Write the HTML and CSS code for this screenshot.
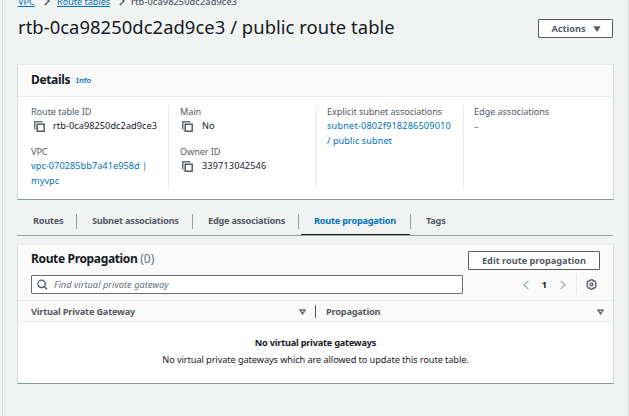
FILE: index.html
```html
<!DOCTYPE html>
<html lang="en">
<head>
<meta charset="utf-8">
<title>Route table details</title>
<link rel="stylesheet" href="styles.css">
</head>
<body>
<svg width="0" height="0" class="defs">
  <symbol id="copy" viewBox="0 0 11 11"><path d="M.8 8.5V.8H8.5" fill="none" stroke="#687078" stroke-width="1.5"/><rect x="3.2" y="3.2" width="7" height="7" fill="#fff" stroke="#545b64" stroke-width="1.5"/></symbol>
  <symbol id="chev" viewBox="0 0 6 10"><path d="M.8 1 5 5 .8 9" fill="none" stroke="currentColor" stroke-width="1.5"/></symbol>
  <symbol id="sort" viewBox="0 0 7 6"><path d="M1 1H6L3.5 5Z" fill="none" stroke="#687078" stroke-width="1.5"/></symbol>
</svg>
<main class="page">
  <nav class="crumbs">
    <a class="c1">VPC</a><svg><use href="#chev"/></svg><a class="c2">Route tables</a><svg><use href="#chev"/></svg><span class="c3">rtb-0ca98250dc2ad9ce3</span>
  </nav>
  <header class="title-row">
    <h1><span>rtb-0ca98250dc2ad9ce3 / public route table</span></h1>
    <button class="btn actions"><span>Actions</span><svg width="8" height="6" viewBox="0 0 8 6"><path d="M.3.3H7.7L4 6Z" fill="#545b64"/></svg></button>
  </header>
  <section class="card details">
    <div class="card-head"><h2>Details</h2><a class="info">Info</a></div>
    <div class="cols">
      <div class="col">
        <div class="field"><div class="label">Route table ID</div><div class="value"><svg class="copy"><use href="#copy"/></svg><span>rtb-0ca98250dc2ad9ce3</span></div></div>
        <div class="field"><div class="label">VPC</div><div class="value link"><span class="vpc">vpc-070285bb7a41e958d |</span></div><div class="value link"><span>myvpc</span></div></div>
      </div>
      <div class="col">
        <div class="field"><div class="label">Main</div><div class="value"><svg class="copy"><use href="#copy"/></svg><span>No</span></div></div>
        <div class="field"><div class="label">Owner ID</div><div class="value"><svg class="copy"><use href="#copy"/></svg><span class="owner">339713042546</span></div></div>
      </div>
      <div class="col">
        <div class="field"><div class="label">Explicit subnet associations</div><div class="value link"><span class="subnet">subnet-0802f918286509010</span></div><div class="value link"><span>/ public subnet</span></div></div>
      </div>
      <div class="col">
        <div class="field"><div class="label">Edge associations</div><div class="value muted">–</div></div>
      </div>
    </div>
  </section>
  <nav class="tabs">
    <a class="t1"><span>Routes</span></a><a class="t2"><span>Subnet associations</span></a><a class="t3"><span>Edge associations</span></a><a class="t4 active"><span>Route propagation</span></a><a class="t5"><span>Tags</span></a>
  </nav>
  <section class="card table-card">
    <div class="table-top">
      <h2>Route Propagation <span class="count">(0)</span></h2>
      <button class="btn edit"><span>Edit route propagation</span></button>
    </div>
    <div class="tools">
      <div class="search"><svg width="11" height="11" viewBox="0 0 11 11"><circle cx="4.6" cy="4.8" r="3.7" fill="none" stroke="#545b64" stroke-width="1.3"/><path d="M7.3 7.5 10 10.2" stroke="#545b64" stroke-width="1.5"/></svg><span>Find virtual private gateway</span></div>
      <div class="pager"><svg class="prev"><use href="#chev"/></svg><b>1</b><svg><use href="#chev"/></svg></div>
      <div class="settings"><svg width="11" height="11" viewBox="0 0 11 11" fill="none" stroke="#545b64" stroke-width="1.3"><path d="M4.3 .8H6.7L7.2 2 8.8 1.9 10.1 4 9.4 5.5 10.1 7 8.8 9.1 7.2 9 6.7 10.2H4.3L3.8 9 2.2 9.1 .9 7 1.6 5.5 .9 4 2.2 1.9 3.8 2Z"/><circle cx="5.5" cy="5.5" r="1.4"/></svg></div>
    </div>
    <div class="thead">
      <div class="th th1"><span>Virtual Private Gateway</span><svg class="sort"><use href="#sort"/></svg></div>
      <div class="th th2"><span>Propagation</span><svg class="sort"><use href="#sort"/></svg></div>
    </div>
    <div class="empty"><b>No virtual private gateways</b><p>No virtual private gateways which are allowed to update this route table.</p></div>
  </section>
</main>
</body>
</html>
```
FILE: styles.css
```css
* { box-sizing: border-box; }
body { margin: 0; height: 416px; overflow: hidden; background: #f1f3f3; font-family: "Noto Sans", sans-serif; font-size: 9.2px; color: #16191f; white-space: nowrap; }
h1, h2, p { margin: 0; }
svg { display: block; flex: none; }
.defs { position: absolute; }
.page { height: 416px; margin-left: 2px; padding: 0 14px; border-left: 1px solid #d5dbdb; border-right: 1px solid #d5dbdb; overflow: hidden; }
.crumbs { display: flex; height: 7px; align-items: flex-end; padding-left: 1px; line-height: 8px; color: #545b64; }
.crumbs svg { width: 6px; height: 10px; margin: 0 7px 1px 9px; }
.crumbs a { color: #0073bb; border-bottom: 1px solid #0073bb; }
.crumbs .c1 { width: 17px; }
.crumbs .c2 { width: 53px; letter-spacing: -.06px; }
.crumbs .c3 { margin-left: -1px; padding-bottom: 1px; font-weight: 500; letter-spacing: .1px; }
.title-row { display: flex; justify-content: space-between; height: 57px; padding: 12px 1px 0 1px; }
h1 { margin-top: -1px; font-size: 18.4px; font-weight: 400; line-height: 18px; letter-spacing: .05px; }
.btn { display: flex; align-items: center; justify-content: center; height: 19px; padding: 0; background: #fff; border: 1px solid #545b64; border-radius: 1px; font: 700 9.2px "Noto Sans", sans-serif; color: #545b64; }
.btn span { margin-top: -1px; }
.actions { width: 75px; gap: 7px; padding-left: 1px; }
.card { width: 597px; background: #fff; border: 1px solid #d5dbdb; border-top-color: #eaeded; border-bottom-color: #879596; }
.details { height: 136px; }
.card-head { display: flex; align-items: center; height: 32px; padding: 0 13px 2px; gap: 6px; background: #fafafa; border-bottom: 1px solid #eaeded; }
h2 { font-size: 12px; font-weight: 700; line-height: 16px; letter-spacing: -.35px; }
.info { font-size: 7.6px; font-weight: 600; color: #0073bb; padding-top: 1px; }
.cols { display: grid; grid-template-columns: 137px 148px 147px 1fr; grid-template-rows: 84px; height: 84px; margin: 8px 13px 0; }
.col + .col { border-left: 1px solid #eaeded; padding-left: 10px; }
.col:nth-child(2) { padding-left: 11px; }
.field { margin-bottom: 11px; }
.label { line-height: 14px; color: #545b64; letter-spacing: -.1px; }
.value { display: flex; align-items: center; height: 15px; line-height: 14px; }
.value span { height: 15px; letter-spacing: .05px; }
.value .subnet { letter-spacing: .16px; }
.value .vpc { letter-spacing: .03px; }
.value .owner { letter-spacing: .1px; }
.copy { width: 11px; height: 11px; margin: 0 8px 0 3px; }
.col:nth-child(2) .copy { margin: 0 9px 0 2px; }
.link { color: #0073bb; }
.muted { color: #687078; }
.tabs { display: flex; height: 36px; width: 596px; border-bottom: 1px solid #95a5a6; padding-top: 14px; color: #545b64; font-weight: 700; letter-spacing: -.24px; }
.tabs a { position: relative; height: 15px; line-height: 14px; border-right: 1px solid #95a5a6; padding-left: 15px; }
.tabs .t1 { width: 60px; padding-left: 16px; }
.t2 { width: 116px; }
.tabs .t3 { width: 106px; }
.tabs .t4 { width: 112px; color: #0073bb; }
.tabs .t5 { border-right: 0; }
.active::after { content: ""; position: absolute; left: 2px; right: 0; bottom: -6px; height: 1px; background: #16191f; }
.table-card { height: 140px; margin-top: 8px; }
.table-top { display: flex; justify-content: space-between; height: 30px; padding: 6px 13px 0; background: #fafafa; }
.count { font-weight: 400; color: #687078; letter-spacing: 0; }
.edit { width: 132px; }
.tools { display: flex; height: 26px; padding-left: 13px; background: #fafafa; border-bottom: 1px solid #eaeded; }
.search { display: flex; align-items: center; gap: 6px; width: 432px; height: 19px; padding-left: 5px; background: #fff; border: 1px solid #687078; border-radius: 1px; color: #687078; font-style: italic; }
.search span { margin-top: -1px; letter-spacing: .04px; }
.pager { display: flex; align-items: center; justify-content: space-between; width: 43px; height: 19px; margin-left: 60px; color: #aab7b8; }
.pager svg { width: 6px; height: 10px; }
.pager b { color: #16191f; }
.prev { transform: scaleX(-1); }
.settings { display: flex; align-items: center; height: 20px; margin: -1px 0 0 10px; padding-left: 9px; border-left: 1px solid #eaeded; }
.thead { display: flex; height: 21px; padding: 4px 9px 3px 13px; background: #fafafa; border-bottom: 1px solid #eaeded; font-weight: 700; color: #545b64; letter-spacing: -.2px; }
.th { display: flex; align-items: center; justify-content: space-between; height: 13px; }
.th span { margin-top: -1px; }
.th1 { width: 285px; padding-right: 9px; border-right: 1px solid #545b64; }
.th2 { flex: 1; padding-left: 10px; }
.sort { width: 7px; height: 6px; }
.empty { padding-top: 13px; text-align: center; line-height: 15px; }
.empty b { letter-spacing: -.22px; }
.empty p { margin-top: 2px; letter-spacing: -.08px; }
```
